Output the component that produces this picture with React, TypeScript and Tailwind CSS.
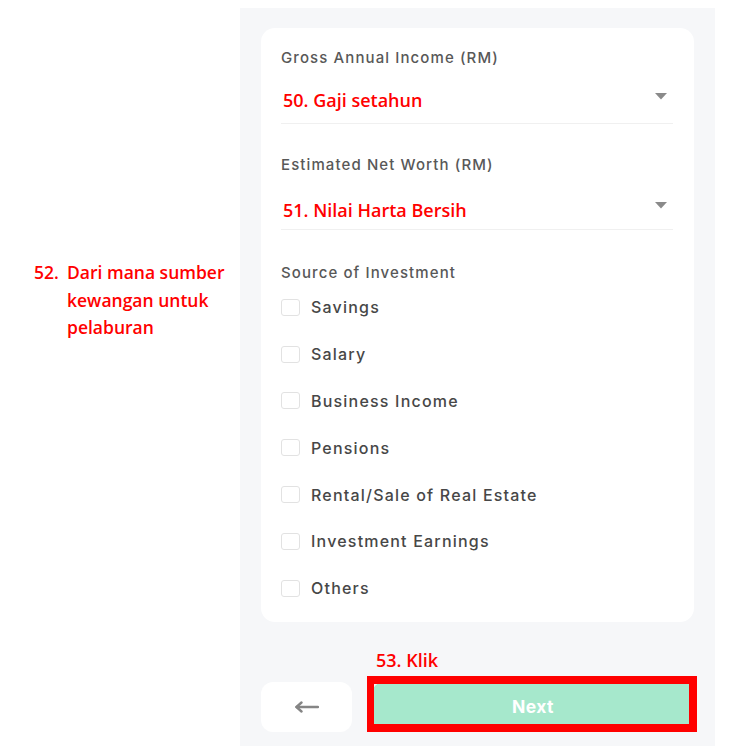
const sources = [
  "Savings",
  "Salary",
  "Business Income",
  "Pensions",
  "Rental/Sale of Real Estate",
  "Investment Earnings",
  "Others",
];

const uiFont = { fontFamily: "Inter, 'Noto Sans', sans-serif" };
const noteFont = { fontFamily: "'Open Sans', 'Noto Sans', sans-serif" };

const Caret = () => (
  <svg width="12" height="7" viewBox="0 0 12 7" className="shrink-0">
    <path d="M0 0 H12 L6 6.5 Z" fill="#8a8a8a" />
  </svg>
);

const BackArrow = () => (
  <svg width="24" height="12" viewBox="0 0 24 12" fill="none">
    <path d="M1.5 6 H23" stroke="#858585" strokeWidth="2.4" strokeLinecap="round" />
    <path d="M6.5 1.5 L1.5 6 L6.5 10.5" stroke="#858585" strokeWidth="2.4" strokeLinecap="round" strokeLinejoin="round" />
  </svg>
);

const SelectField = ({
  label,
  value,
  valueMt,
  caretMt,
  pb,
}: {
  label: string;
  value: string;
  valueMt: string;
  caretMt: string;
  pb: string;
}) => (
  <div>
    <div className="text-[15px] leading-[20px] font-medium text-[#585858] tracking-[1.1px]">{label}</div>
    <div className={`flex items-start justify-between border-b border-[#f0f0f0] ${valueMt} ${pb}`}>
      <span className="pl-[2px] text-[18px] leading-[24px] font-semibold text-[#ff0000]" style={noteFont}>
        {value}
      </span>
      <span className={`pr-[6px] ${caretMt}`}>
        <Caret />
      </span>
    </div>
  </div>
);

const App = () => {
  return (
    <div className="w-[744px] h-[754px] bg-white flex overflow-hidden" style={uiFont}>
      {/* Annotation column */}
      <div className="w-[240px] shrink-0 pt-[259px] pl-[34px]" style={noteFont}>
        <div className="flex text-[17.5px] leading-[27.5px] font-semibold text-[#ff0000]">
          <span className="w-[33px] shrink-0">52.</span>
          <span className="w-[168px]">Dari mana sumber kewangan untuk pelaburan</span>
        </div>
      </div>

      {/* Form panel */}
      <div className="mt-[8px] w-[475px] h-[738px] bg-[#f6f7f9] px-[21px] pt-[20px] flex flex-col">
        <div className="w-[433px] h-[594px] bg-white rounded-[14px] pt-[20px] pl-[20px] pr-[21px]">
          <SelectField
            label="Gross Annual Income (RM)"
            value="50. Gaji setahun"
            valueMt="mt-[20px]"
            caretMt="mt-[5px]"
            pb="pb-[11px]"
          />
          <div className="mt-[31px]">
            <SelectField
              label="Estimated Net Worth (RM)"
              value="51. Nilai Harta Bersih"
              valueMt="mt-[23px]"
              caretMt="mt-[4px]"
              pb="pb-[7px]"
            />
          </div>

          <div className="mt-[33px] text-[15px] leading-[20px] font-medium text-[#585858] tracking-[1.1px]">
            Source of Investment
          </div>
          <div className="mt-[1px] flex flex-col">
            {sources.map((s) => (
              <label key={s} className="h-[46.8px] flex items-center gap-[11px]">
                <span className="w-[19px] h-[17px] rounded-[3px] border-[1.5px] border-[#e2e2e2] bg-white shrink-0" />
                <span className="text-[16px] font-medium text-[#474747] tracking-[1.2px]">{s}</span>
              </label>
            ))}
          </div>
        </div>

        <div className="relative mt-[60px]">
          <div className="absolute left-[115px] -top-[34px] text-[18px] leading-[24px] font-semibold text-[#ff0000]" style={noteFont}>
            53. Klik
          </div>
          <div className="flex gap-[20px] w-[433px]">
            <button className="w-[91px] h-[50px] bg-white rounded-[12px] flex items-center justify-center">
              <BackArrow />
            </button>
            <div className="relative flex-1">
              <button className="w-full h-[50px] rounded-[12px] bg-[#a6e8cc] text-white font-bold text-[17.5px] tracking-[0.4px]">
                Next
              </button>
              <div className="absolute -left-[5px] -top-[6px] -right-[3px] bottom-0 border-[8px] border-l-[7px] border-[#ff0000]" />
            </div>
          </div>
        </div>
      </div>
    </div>
  );
};

export default App;
